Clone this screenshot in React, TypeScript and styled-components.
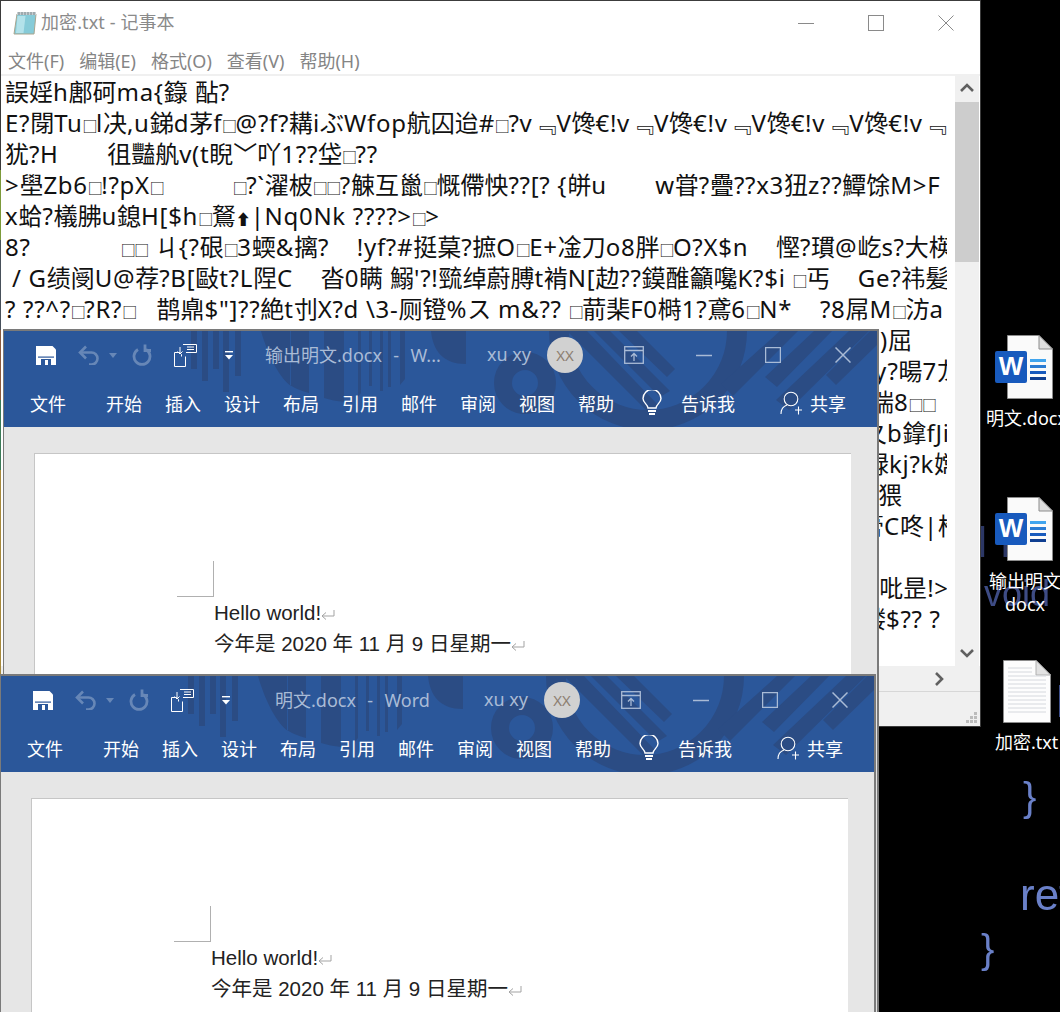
import styled, { createGlobalStyle } from "styled-components";

const cjk = `"Noto Sans", "Noto Sans CJK SC", "DejaVu Sans", sans-serif`;
const blue = "#2b579a";
const stripe = "#2b4c84";

const GlobalStyle = createGlobalStyle`
  html, body {
    margin: 0;
    padding: 0;
    background: #000;
  }
  #root {
    width: 1060px;
    height: 1012px;
  }
`;

const noteLines = [
  "誤婬h鄌砢ma{籙 酟?",
  "E?閕Tu□l决,u銻d茅f□@?f?耩iぶWfop航囚迨#□?v﹃V馋€!v﹃V馋€!v﹃V馋€!v﹃V馋€!v﹃",
  "犹?H       徂豔舧v(t睨﹀吖1??垈□??",
  ">壆Zb6□!?pX□          □?`濯柀□□?觫互巤□慨僀怏??[? {皏u       w甞?疊??x3狃z??鱏馀M>F",
  "x蛤?檥胇u鎴H[$h□鴑⬆|Nq0Nk ????>□>",
  "8?             □□ ㄐ{?硍□3蝡&摛?    !yf?#挺菒?摭O□E+凎刀o8胖□O?X$n    慳?瑻@屹s?大楧",
  " / G绩阌U@荐?B[敺t?L陧C    沓0瞒 鰯'?!巰绰蔚膊t褃N[赲??鏌醀籲嚵K?$i □丐    Ge?祎髪",
  "? ??^?□?R?□   鹊鼑$\"]??絶t刌X?d \\3-厕镫%ス m&?? □葥棐F0榯1?鳶6□N*    ?8屌M□汸a",
];

// lines whose start lies under the Word windows: only the tail shows
const tailLines: [string, number][] = [
  [")屈", 875],
  ["y?暘7尨", 869],
  ["喘8□□", 865],
  ["夊b鎿fJi", 858],
  ["禄kj?k嫦", 860],
  ["猥", 873],
  ["膏C咚|柃", 855],
  [" ", 875],
  ["?吡昰!>", 863],
  ["耧$?? ?", 857],
];

const Desktop = styled.div`
  position: relative;
  width: 1060px;
  height: 1012px;
  overflow: hidden;
  background: #000;
  font-family: ${cjk};
`;

const EdgeStrip = styled.div`
  position: absolute;
  left: 0;
  top: 0;
  width: 2px;
  height: 680px;
  background: linear-gradient(#3a3a3a 0 170px, #7c9a3a 170px 240px, #47505a 240px 330px, #8c5a3c 330px 400px, #3b7a57 400px 470px, #a88a3c 470px);
`;

const Notepad = styled.div`
  position: absolute;
  left: 1px;
  top: 0;
  width: 979px;
  height: 725px;
  display: flex;
  flex-direction: column;
  background: #fff;
  border-top: 1px solid #3c3c3c;
  border-right: 1px solid #3c3c3c;
  border-bottom: 1px solid #3c3c3c;
`;

const NoteTitleBar = styled.div`
  height: 44px;
  flex: none;
  display: flex;
  align-items: center;
  padding-left: 12px;
  color: #8a8a8a;
  font-size: 18px;
`;

const NoteTitle = styled.span`
  margin: -4px 0 0 4px;
  flex: 1;
  letter-spacing: 0.1px;
`;

const NoteControls = styled.div`
  display: flex;
  align-items: center;
  gap: 54px;
  padding-right: 26px;
`;

const NoteMenu = styled.div`
  height: 29px;
  flex: none;
  display: flex;
  align-items: center;
  gap: 15px;
  padding-left: 7px;
  color: #858585;
  font-size: 18px;
  border-bottom: 2px solid #f0f0f0;
`;

const NoteBody = styled.div`
  flex: 1;
  min-height: 0;
  display: flex;
`;

const TextClip = styled.div`
  width: 946px;
  padding: 0 0 0 4px;
  box-sizing: border-box;
  overflow: hidden;
  color: #111;
  font-size: 24px;
`;

const NoteLine = styled.div<{ $indent?: number }>`
  height: 31px;
  line-height: 31px;
  white-space: pre;
  padding-left: ${(p) => p.$indent ?? 0}px;
`;

const NoBox = styled.span`
  font-size: 15px;
  letter-spacing: -1.5px;
`;

const ArrowMark = styled.span`
  font-size: 15px;
`;

const AsciiRun = styled.span`
  letter-spacing: 0.7px;
`;

const TextGutter = styled.div`
  width: 8px;
  background: #fff;
`;

const VScroll = styled.div`
  width: 24px;
  flex: none;
  display: flex;
  flex-direction: column;
  background: #f0f0f0;
`;

const ScrollArrow = styled.div<{ $height: number }>`
  height: ${(p) => p.$height}px;
  flex: none;
  display: flex;
  align-items: center;
  justify-content: center;
`;

const ScrollThumb = styled.div`
  height: 160px;
  flex: none;
  background: #cdcdcd;
`;

const ScrollGap = styled.div`
  flex: 1;
`;

const HScroll = styled.div`
  height: 25px;
  flex: none;
  display: flex;
  align-items: center;
  justify-content: flex-end;
  padding-right: 33px;
  background: #f0f0f0;
  border-bottom: 1px solid #d7d7d7;
`;

const StatusBar = styled.div`
  height: 32px;
  flex: none;
  display: flex;
  align-items: flex-end;
  justify-content: flex-end;
  padding: 0 2px 2px 0;
  background: #f0f0f0;
`;

const WordFrame = styled.div<{ $left: number; $top: number; $height: number }>`
  position: absolute;
  left: ${(p) => p.$left}px;
  top: ${(p) => p.$top}px;
  width: 873px;
  height: ${(p) => p.$height}px;
  display: flex;
  flex-direction: column;
  background: #e6e6e6;
  border: 2px solid #7a7a7a;
  border-width: 2px 2px 0 1px;
`;

const WordHeader = styled.div`
  position: relative;
  height: 96px;
  flex: none;
  background: ${blue};
  overflow: hidden;
`;

const HeaderArt = styled.svg`
  position: absolute;
  left: 0;
  top: 0;
`;

const TitleRow = styled.div`
  position: relative;
  height: 47px;
  display: flex;
  align-items: center;
  padding-left: 32px;
`;

const Qat = styled.div`
  display: flex;
  align-items: center;
  width: 229px;
  flex: none;
  margin-top: 1px;
`;

const QatSlot = styled.div<{ $width: number }>`
  width: ${(p) => p.$width}px;
  flex: none;
  display: flex;
`;

const DocTitle = styled.div<{ $pad: number }>`
  flex: 1;
  margin-top: -1px;
  padding-left: ${(p) => p.$pad}px;
  color: #a9bbd6;
  font-size: 18px;
  word-spacing: 1px;
  white-space: pre;
`;

const Account = styled.div`
  width: 60px;
  flex: none;
  margin-top: -1px;
  color: #a9bbd6;
  font-size: 18px;
`;

const Avatar = styled.div`
  width: 36px;
  height: 36px;
  flex: none;
  display: flex;
  align-items: center;
  justify-content: center;
  border-radius: 50%;
  background: #d1d1d1;
  color: #8d7f72;
  font-size: 15px;
`;

const WinControls = styled.div`
  width: 294px;
  flex: none;
  display: flex;
  align-items: center;
  padding-left: 41px;
  box-sizing: border-box;
`;

const TabRow = styled.div`
  position: relative;
  height: 49px;
  display: flex;
  align-items: center;
  padding-left: 26px;
  color: #fff;
  font-size: 18px;
`;

const Tab = styled.div<{ $after?: number }>`
  width: 36px;
  flex: none;
  margin-right: ${(p) => p.$after ?? 23}px;
  white-space: nowrap;
`;

const TellMe = styled.div`
  display: flex;
  align-items: center;
  gap: 19px;
  margin-left: 5px;
  white-space: nowrap;
`;

const Share = styled.div`
  display: flex;
  align-items: center;
  gap: 8px;
  margin-left: 45px;
  white-space: nowrap;
`;

const PageArea = styled.div`
  flex: 1;
  min-height: 0;
  padding: 26px 26px 0 30px;
  overflow: hidden;
`;

const Page = styled.div`
  height: 600px;
  background: #fff;
  border: 1px solid #c6c6c6;
  border-width: 1px 0 0 1px;
  color: #222;
  font-family: "Liberation Sans", "Noto Sans CJK SC", sans-serif;
  font-size: 20.5px;
`;

const CropMark = styled.div`
  width: 36px;
  height: 35px;
  margin: 107px 0 0 142px;
  border-right: 1px solid #b0b0b0;
  border-bottom: 1px solid #b0b0b0;
`;

const PageLine = styled.div`
  height: 31px;
  line-height: 31px;
  padding-left: 179px;
  display: flex;
  align-items: center;
  white-space: pre;
`;

const FileIcon = styled.div<{ $left: number; $top: number; $width: number }>`
  position: absolute;
  left: ${(p) => p.$left}px;
  top: ${(p) => p.$top}px;
  width: ${(p) => p.$width}px;
  display: flex;
`;

const FileLabel = styled.div<{ $left: number; $top: number }>`
  position: absolute;
  left: ${(p) => p.$left}px;
  top: ${(p) => p.$top}px;
  color: #fff;
  font-size: 18px;
  line-height: 23px;
  text-align: center;
  white-space: nowrap;
`;

const BgCode = styled.div<{ $left: number; $top: number; $size: number; $color: string }>`
  position: absolute;
  left: ${(p) => p.$left}px;
  top: ${(p) => p.$top}px;
  color: ${(p) => p.$color};
  font-family: "Liberation Sans", sans-serif;
  font-size: ${(p) => p.$size}px;
  line-height: 1;
  white-space: pre;
  filter: blur(0.6px);
`;

function NotepadIcon() {
  return (
    <svg width="24" height="24" viewBox="0 0 24 24">
      <path d="M4 3h19l-2 20H1z" fill="#86cbd8" stroke="#a9a58f" />
      <path d="M4.500 5h8l-2 17H3z" fill="#b3e2ea" />
      <path d="M4 1h19v3H4z" fill="#c7cfd2" />
      <path d="M6 1v3M9 1v3M12 1v3M15 1v3M18 1v3M21 1v3" stroke="#79858a" />
    </svg>
  );
}

function Chrome({ kind, color, size = 16, wide = 1 }: { kind: string; color: string; size?: number; wide?: number }) {
  return (
    <svg width={size} height={size} viewBox="0 0 16 16" fill="none" stroke={color} strokeWidth={wide}>
      {kind === "min" && <path d="M0 8.5h16" />}
      {kind === "max" && <rect x="0.5" y="0.5" width="15" height="15" />}
      {kind === "close" && <path d="M0.5 0.5l15 15M15.5 0.5l-15 15" />}
    </svg>
  );
}

function Chevron({ dir }: { dir: "up" | "down" | "right" }) {
  const d = {
    up: "M2 10l6-6 6 6",
    down: "M2 5l6 6 6-6",
    right: "M5 2l6 6-6 6",
  }[dir];
  return (
    <svg width="16" height="16" viewBox="0 0 16 16" fill="none" stroke="#606060" strokeWidth="2.6">
      <path d={d} />
    </svg>
  );
}

function Grip() {
  return (
    <svg width="12" height="12" viewBox="0 0 12 12" fill="#bcbcbc">
      <rect x="8" y="0" width="3" height="3" />
      <rect x="4" y="4" width="3" height="3" />
      <rect x="8" y="4" width="3" height="3" />
      <rect x="0" y="8" width="3" height="3" />
      <rect x="4" y="8" width="3" height="3" />
      <rect x="8" y="8" width="3" height="3" />
    </svg>
  );
}

function SaveIcon() {
  return (
    <svg width="20" height="20" viewBox="0 0 20 20">
      <path d="M0 1h16.5L20 4.5V20H0z" fill="#fff" />
      <path d="M2 11.5h16v1.2H2z" fill={blue} />
      <path d="M5 14h10v6H5z" fill={blue} />
      <path d="M9 15h3v5H9z" fill="#fff" />
    </svg>
  );
}

function UndoIcon() {
  return (
    <svg width="22" height="20" viewBox="0 0 22 20" fill="none" stroke="#6787b7" strokeWidth="2.6">
      <path d="M8 1.5L2 7.5l6 6" />
      <path d="M2.5 7.5h11a6 6 0 0 1 0 12H11" />
    </svg>
  );
}

function RedoIcon() {
  return (
    <svg width="20" height="22" viewBox="0 0 20 22" fill="none" stroke="#6787b7" strokeWidth="2.8">
      <path d="M6 5.5a8 8 0 1 0 8 0" />
      <path d="M14 0.5v6h6" transform="translate(-1 0)" />
    </svg>
  );
}

function Caret({ color }: { color: string }) {
  return (
    <svg width="8" height="5" viewBox="0 0 8 5">
      <path d="M0 0h8L4 5z" fill={color} />
    </svg>
  );
}

function TouchIcon() {
  return (
    <svg width="23" height="23" viewBox="0 0 23 23" fill="none" stroke="#fff">
      <path d="M0.5 8.5h5l2 2v2M0.5 8.5v14h11v-10" />
      <path d="M9 0.5h13.5v8H12" />
      <path d="M13 3h7M13 5.5h7" />
      <path d="M6 3v7M3.5 7.5L6 10l2.5-2.5" />
    </svg>
  );
}

function QatMore() {
  return (
    <svg width="8" height="9" viewBox="0 0 8 9">
      <path d="M0 0h8v1.4H0z" fill="#fff" />
      <path d="M0 4h8L4 8.5z" fill="#fff" />
    </svg>
  );
}

function RibbonDisplay() {
  return (
    <svg width="20" height="18" viewBox="0 0 20 18" fill="none" stroke="#a9bbd6" strokeWidth="1.3">
      <rect x="0.7" y="0.7" width="18.6" height="16.6" />
      <path d="M0.7 4.5h18.6M10 15V8M7 10.5L10 7.5l3 3" />
    </svg>
  );
}

function Bulb() {
  return (
    <svg width="20" height="26" viewBox="0 0 20 26" fill="none" stroke="#fff" strokeWidth="1.4">
      <path d="M6 18c0-3.5-5-5-5-9.5a9 9 0 0 1 18 0C19 13 14 14.500 14 18z" />
      <path d="M6 21h8M7 24h6" strokeWidth="2" />
    </svg>
  );
}

function PersonPlus() {
  return (
    <svg width="22" height="24" viewBox="0 0 22 24" fill="none" stroke="#fff" strokeWidth="1.1">
      <circle cx="11" cy="8" r="6.800" />
      <path d="M1 23c0-5 3-8 6-9M15 19h7M18.500 15.500v8" />
    </svg>
  );
}

// background art of the Word title bar, same in both windows
function HeaderStripes() {
  return (
    <HeaderArt width="873" height="96" viewBox="0 0 873 96" fill={stripe}>
      <rect x="187" y="0" width="6" height="38" />
      <rect x="198" y="0" width="6" height="50" />
      <rect x="209" y="0" width="6" height="38" />
      <rect x="219" y="0" width="6" height="61" />
      <rect x="231" y="0" width="6" height="45" />
      <path d="M257 0C265 28 277 48 287 55V0zM286 0h19v62c-7-2-13-4-19-8zM320 0h20v71c-7-1-14-2-20-4z" />
      <path d="M354 0h3v62l-3 4zM365 0h3v55h-3zM376 0h3v60h-3zM384 0h3v56h-3zM396 0h5v48l-5 6z" />
      <path d="M427 0c2 20 12 33 35 33V0z" />
      <circle cx="521" cy="52" r="22" fill="none" stroke={stripe} strokeWidth="18" />
      <circle cx="644" cy="0" r="89" fill="none" stroke={stripe} strokeWidth="20" />
      <path d="M563 0l80 80 12-5-72-75zM590 0l66 66 10-6-60-60zM615 0l48 46 8-8-38-38z" />
      <path d="M776 0h18l-65 65-12-12zM810 0h18l-55 56-12-10zM845 0h20l-80 79-13-10z" />
      <path d="M866 0h7v14l-41 40-10-10z" />
    </HeaderArt>
  );
}

function ReturnMark() {
  return (
    <svg width="14" height="12" viewBox="0 0 14 12" fill="none" stroke="#a3a3a3" style={{ marginTop: 5 }}>
      <path d="M13 1v6H1M5 3.500L1 7l4 3.500" />
    </svg>
  );
}

// missing-glyph boxes are narrower than a full character, latin runs sit wider
function NoteText({ text }: { text: string }) {
  const parts = text.split(/([\x20-\x7e€]+|□|⬆)/);
  return (
    <>
      {parts.map((part, i) => {
        if (part === "□") return <NoBox key={i}>□</NoBox>;
        if (part === "⬆") return <ArrowMark key={i}>⬆</ArrowMark>;
        if (/^[\x20-\x7e€]+$/.test(part)) return <AsciiRun key={i}>{part}</AsciiRun>;
        return <span key={i}>{part}</span>;
      })}
    </>
  );
}

interface WordWindowProps {
  left: number;
  top: number;
  height: number;
  title: string;
  titlePad: number;
}

function WordWindow({ left, top, height, title, titlePad }: WordWindowProps) {
  return (
    <WordFrame $left={left} $top={top} $height={height}>
      <WordHeader>
        <HeaderStripes />
        <TitleRow>
          <Qat>
            <QatSlot $width={42}>
              <SaveIcon />
            </QatSlot>
            <QatSlot $width={31}>
              <UndoIcon />
            </QatSlot>
            <QatSlot $width={23}>
              <Caret color="#6787b7" />
            </QatSlot>
            <QatSlot $width={42}>
              <RedoIcon />
            </QatSlot>
            <QatSlot $width={51}>
              <TouchIcon />
            </QatSlot>
            <QatSlot $width={8}>
              <QatMore />
            </QatSlot>
          </Qat>
          <DocTitle $pad={titlePad}>{title}</DocTitle>
          <Account>xu xy</Account>
          <Avatar>XX</Avatar>
          <WinControls>
            <RibbonDisplay />
            <QatSlot $width={52} />
            <Chrome kind="min" color="#a9bbd6" size={16} wide={1.5} />
            <QatSlot $width={53} />
            <Chrome kind="max" color="#a9bbd6" size={16} wide={1.5} />
            <QatSlot $width={54} />
            <Chrome kind="close" color="#a9bbd6" size={16} wide={1.5} />
          </WinControls>
        </TitleRow>
        <TabRow>
          <Tab $after={40}>文件</Tab>
          <Tab>开始</Tab>
          <Tab>插入</Tab>
          <Tab>设计</Tab>
          <Tab>布局</Tab>
          <Tab>引用</Tab>
          <Tab>邮件</Tab>
          <Tab>审阅</Tab>
          <Tab>视图</Tab>
          <Tab>帮助</Tab>
          <TellMe>
            <Bulb />
            <span>告诉我</span>
          </TellMe>
          <Share>
            <PersonPlus />
            <span>共享</span>
          </Share>
        </TabRow>
      </WordHeader>
      <PageArea>
        <Page>
          <CropMark />
          <PageLine>
            Hello world!
            <ReturnMark />
          </PageLine>
          <PageLine>
            今年是 2020 年 11 月 9 日星期一
            <ReturnMark />
          </PageLine>
        </Page>
      </PageArea>
    </WordFrame>
  );
}

function WordFile() {
  return (
    <svg width="58" height="64" viewBox="0 0 58 64">
      <path d="M12.500 0.500H44L57.500 14V63.500H12.500z" fill="#fafafa" stroke="#8c8c8c" />
      <path d="M44 0.500V14H57.500z" fill="#dedede" stroke="#8c8c8c" />
      <rect x="35" y="24" width="16" height="3" fill="#41a5ee" />
      <rect x="35" y="30" width="16" height="3" fill="#2b7cd3" />
      <rect x="35" y="36" width="16" height="3" fill="#185abd" />
      <rect x="35" y="42" width="16" height="3" fill="#103f91" />
      <rect x="0" y="16" width="32" height="32" rx="2" fill="#185abd" />
      <text x="16" y="40" fill="#fff" fontFamily="Liberation Sans" fontWeight="700" fontSize="26" textAnchor="middle">
        W
      </text>
    </svg>
  );
}

function TextFile() {
  return (
    <svg width="48" height="63" viewBox="0 0 48 63">
      <path d="M0.500 0.500H33L47.500 15V62.500H0.500z" fill="#fdfdfd" stroke="#8c8c8c" />
      <path d="M33 0.500V15H47.500z" fill="#e2e2e2" stroke="#b0b0b0" />
      <path
        d="M5 8h24M5 12h24M5 16h38M5 20h38M5 24h38M5 28h38M5 32h38M5 36h38M5 40h38M5 44h38M5 48h38M5 52h38"
        stroke="#d5d8dd"
      />
    </svg>
  );
}

export default function App() {
  return (
    <Desktop>
      <GlobalStyle />
      <BgCode $left={976} $top={520} $size={44} $color="#2c3765">
        {"I r    u"}
      </BgCode>
      <BgCode $left={984} $top={576} $size={36} $color="#3e4c85">
        void
      </BgCode>
      <BgCode $left={1056} $top={680} $size={44} $color="#3c4d88">
        l
      </BgCode>
      <BgCode $left={1023} $top={777} $size={40} $color="#6a80c8">
        {"}"}
      </BgCode>
      <BgCode $left={1020} $top={873} $size={44} $color="#6a80c8">
        ret
      </BgCode>
      <BgCode $left={981} $top={929} $size={40} $color="#6a80c8">
        {"}"}
      </BgCode>

      <FileIcon $left={995} $top={335} $width={58}>
        <WordFile />
      </FileIcon>
      <FileLabel $left={986} $top={407}>
        明文.docx
      </FileLabel>
      <FileIcon $left={995} $top={497} $width={58}>
        <WordFile />
      </FileIcon>
      <FileLabel $left={989} $top={570}>
        输出明文
        <br />
        docx
      </FileLabel>
      <FileIcon $left={1003} $top={660} $width={48}>
        <TextFile />
      </FileIcon>
      <FileLabel $left={995} $top={731}>
        加密.txt
      </FileLabel>

      <EdgeStrip />
      <Notepad>
        <NoteTitleBar>
          <NotepadIcon />
          <NoteTitle>加密.txt - 记事本</NoteTitle>
          <NoteControls>
            <Chrome kind="min" color="#8a8a8a" />
            <Chrome kind="max" color="#8a8a8a" />
            <Chrome kind="close" color="#8a8a8a" />
          </NoteControls>
        </NoteTitleBar>
        <NoteMenu>
          <span>文件(F)</span>
          <span>编辑(E)</span>
          <span>格式(O)</span>
          <span>查看(V)</span>
          <span>帮助(H)</span>
        </NoteMenu>
        <NoteBody>
          <TextClip>
            {noteLines.map((line, i) => (
              <NoteLine key={i}>
                <NoteText text={line} />
              </NoteLine>
            ))}
            {tailLines.map(([line, indent], i) => (
              <NoteLine key={i} $indent={indent}>
                <NoteText text={line} />
              </NoteLine>
            ))}
          </TextClip>
          <TextGutter />
          <VScroll>
            <ScrollArrow $height={26}>
              <Chevron dir="up" />
            </ScrollArrow>
            <ScrollThumb />
            <ScrollGap />
            <ScrollArrow $height={26}>
              <Chevron dir="down" />
            </ScrollArrow>
          </VScroll>
        </NoteBody>
        <HScroll>
          <Chevron dir="right" />
        </HScroll>
        <StatusBar>
          <Grip />
        </StatusBar>
      </Notepad>

      <WordWindow left={3} top={329} height={683} title="输出明文.docx  -  W..." titlePad={0} />
      <WordWindow left={0} top={674} height={338} title="明文.docx  -  Word" titlePad={13} />
    </Desktop>
  );
}
